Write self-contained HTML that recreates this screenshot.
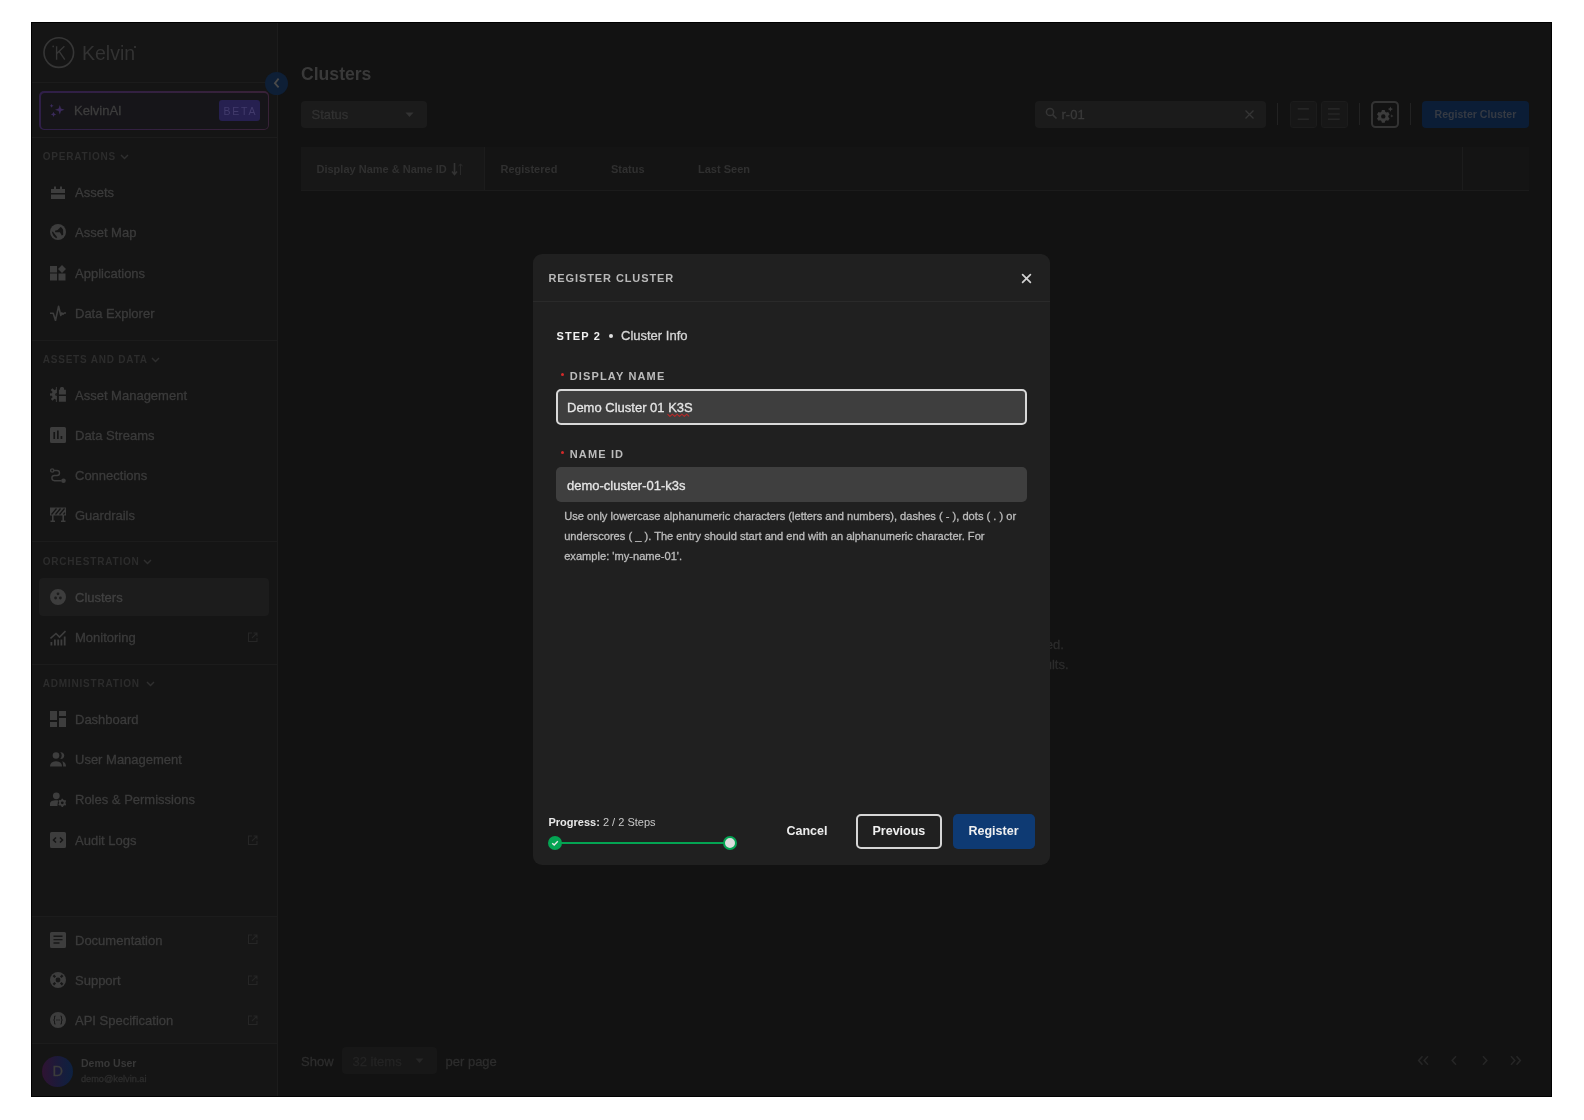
<!DOCTYPE html>
<html><head><meta charset="utf-8">
<style>
*{margin:0;padding:0;box-sizing:border-box}
html,body{width:1584px;height:1120px;overflow:hidden;background:#fff}
body{position:relative;font-family:"Liberation Sans",sans-serif;-webkit-font-smoothing:antialiased}
.a{position:absolute}
.t{position:absolute;white-space:nowrap;line-height:1;top:calc(var(--b) - var(--fs) * 0.8465);font-size:var(--fs)}
.b{font-weight:bold}
.m{-webkit-text-stroke:0.3px currentColor}
#app{position:absolute;left:32px;top:23px;width:1519px;height:1073px;background:#121212;overflow:hidden}
#frame{position:absolute;left:31px;top:22px;width:1521px;height:1075px;border:1px solid #000}
#sb{position:absolute;left:32px;top:23px;width:246px;height:1073px;background:#151515;border-right:1px solid #1c1c1c}
.sep{position:absolute;left:32px;width:245px;height:1px;background:#1c1c1c}
.nav{color:#3b3b3b;--fs:13px}
.sh{color:#2c2c2c;--fs:10px;font-weight:bold;letter-spacing:0.8px}
.ic{position:absolute;fill:#3a3a3a}
.ext{position:absolute;left:246px;width:12px;height:12px}
#sidebar,#main,#modalc{position:absolute;left:0;top:0;width:1584px;height:1120px;will-change:transform}
#modal{position:absolute;left:533px;top:254px;width:517px;height:611px;background:#202020;border-radius:9px}
</style></head>
<body>
<div id="frame"></div>
<div id="app"></div>
<div id="sb"></div>
<!-- SIDEBAR -->
<div id="sidebar">
<div class="sep" style="top:82px"></div>
<div class="sep" style="top:137px"></div>
<div class="sep" style="top:340px"></div>
<div class="sep" style="top:541px"></div>
<div class="sep" style="top:664px"></div>
<div class="a" style="left:32px;top:917px;width:245px;height:126px;background:#171717"></div>
<div class="sep" style="top:916px"></div>
<div class="sep" style="top:1043px"></div>
<!-- logo -->
<svg class="a" style="left:42px;top:36px" width="34" height="34" viewBox="0 0 34 34"><circle cx="16.8" cy="16.6" r="14.8" fill="none" stroke="#363636" stroke-width="1.6"/><path d="M14.6 10.3v13.4M14.8 17.5l7.6-7.2M17.2 15.3l5.6 8.4" fill="none" stroke="#363636" stroke-width="1.4"/><circle cx="11.2" cy="10.4" r="0.9" fill="#363636"/></svg>
<div class="t" style="left:82px;--b:61px;--fs:19.5px;color:#323232">Kelvin</div>
<div class="a" style="left:134px;top:46px;width:2px;height:2px;border-radius:1px;background:#383838"></div>
<!-- KelvinAI -->
<div class="a" style="left:39px;top:91px;width:230px;height:39px;border-radius:5px;padding:1.5px;background:linear-gradient(90deg,#2f1f48,#382238)"><div style="width:100%;height:100%;border-radius:4px;background:#161519"></div></div>
<svg class="a" style="left:49px;top:102px" width="17" height="16" viewBox="0 0 17 16" fill="#3a2a5a"><path d="M10.8 3l1.2 3.6 3.6 1.2-3.6 1.2-1.2 3.6-1.2-3.6L6 7.8l3.6-1.2z"/><path d="M2.6 1.8l.6 1.4 1.4.6-1.4.6-.6 1.4-.6-1.4-1.4-.6 1.4-.6z"/><path d="M4.5 9.8l.8 1.8 1.8.8-1.8.8-.8 1.8-.8-1.8-1.8-.8 1.8-.8z"/></svg>
<div class="t nav m" style="left:74px;--b:114.8px;color:#3d3d3d">KelvinAI</div>
<div class="a" style="left:219px;top:100px;width:41px;height:21px;border-radius:3px;background:#262050"></div>
<div class="t" style="left:223.5px;--b:114.4px;--fs:10.5px;letter-spacing:1.8px;color:#423b6c">BETA</div>
<!-- collapse -->
<div class="a" style="left:265px;top:71.7px;width:23px;height:23px;border-radius:50%;background:#0e1f36"></div>
<svg class="a" style="left:270.5px;top:77px" width="12" height="12" viewBox="0 0 12 12"><path d="M7.6 1.6L3.9 6.2l3.7 4.2" fill="none" stroke="#4a4a4a" stroke-width="1.8"/></svg>
<!-- section headers -->
<div class="t sh" style="left:42.7px;--b:160.8px">OPERATIONS</div>
<div class="t sh" style="left:42.7px;--b:363.4px">ASSETS AND DATA</div>
<div class="t sh" style="left:42.7px;--b:565.8px">ORCHESTRATION</div>
<div class="t sh" style="left:42.7px;--b:687.5px">ADMINISTRATION</div>
<svg class="a" style="left:120px;top:154px" width="9" height="6" viewBox="0 0 9 6"><path d="M1 1l3.5 3.5L8 1" fill="none" stroke="#2f2f2f" stroke-width="1.5"/></svg>
<svg class="a" style="left:151.2px;top:356.6px" width="9" height="6" viewBox="0 0 9 6"><path d="M1 1l3.5 3.5L8 1" fill="none" stroke="#2f2f2f" stroke-width="1.5"/></svg>
<svg class="a" style="left:142.5px;top:559px" width="9" height="6" viewBox="0 0 9 6"><path d="M1 1l3.5 3.5L8 1" fill="none" stroke="#2f2f2f" stroke-width="1.5"/></svg>
<svg class="a" style="left:145.5px;top:680.7px" width="9" height="6" viewBox="0 0 9 6"><path d="M1 1l3.5 3.5L8 1" fill="none" stroke="#2f2f2f" stroke-width="1.5"/></svg>
<!-- active -->
<div class="a" style="left:39px;top:578px;width:230px;height:38px;border-radius:4px;background:#1c1c1c"></div>
<svg class="a" style="left:50px;top:184.3px" width="16" height="16" viewBox="0 0 16 16" fill="#3d3d3d"><path d="M1 5h3V2.5h2V5h4V2.5h2V5h3v4H1z M1 10.5h14V15H1z"/></svg>
<div class="t nav m" style="left:75px;--b:197.1px">Assets</div>
<svg class="a" style="left:50px;top:224px" width="16" height="16" viewBox="0 0 16 16" fill="#3d3d3d"><circle cx="8" cy="8" r="8"/><path fill="#151515" d="M1.8 7.6L3.2 8l4 5.3-1 1C4 13 2.5 11 1.8 7.6z M5 6.7l2.6-.6 3-3.1c1.2.6 2 1.6 2.5 3l.1 4.8-1.4.7-1.9-3.3H5.2z"/></svg>
<div class="t nav m" style="left:75px;--b:237.5px">Asset Map</div>
<svg class="a" style="left:50px;top:265.0px" width="16" height="16" viewBox="0 0 16 16" fill="#3d3d3d"><rect x="0" y="1" width="7" height="6.5"/><path d="M12 0l4 4-4 4-4-4z"/><rect x="0" y="8.5" width="7" height="7"/><rect x="8.5" y="8.5" width="7" height="7"/></svg>
<div class="t nav m" style="left:75px;--b:277.8px">Applications</div>
<svg class="a" style="left:50px;top:305.4px" width="16" height="16" viewBox="0 0 16 16" fill="#3d3d3d"><path d="M0 8.2h3.2L5.5 15.5 8.6 1.2l2.2 9.3 1.1-2.6L13 9.2 14.4 8H16" fill="none" stroke="#3d3d3d" stroke-width="1.6" stroke-linejoin="round"/></svg>
<div class="t nav m" style="left:75px;--b:318.2px">Data Explorer</div>
<svg class="a" style="left:50px;top:387.0px" width="16" height="16" viewBox="0 0 16 16" fill="#3d3d3d"><defs><clipPath id="hg"><rect x="-1" y="-1" width="7.8" height="18"/></clipPath></defs><g clip-path="url(#hg)"><circle cx="7" cy="7.4" r="5.2"/><rect x="5.9" y="-0.2" width="2.4" height="15.2" transform="rotate(0 7 7.4)"/><rect x="5.9" y="-0.2" width="2.4" height="15.2" transform="rotate(45 7 7.4)"/><rect x="5.9" y="-0.2" width="2.4" height="15.2" transform="rotate(90 7 7.4)"/><rect x="5.9" y="-0.2" width="2.4" height="15.2" transform="rotate(135 7 7.4)"/><circle cx="7" cy="7.4" r="1.7" fill="#151515"/></g><path d="M9.9 2.8V1.6A1.6 1.6 0 0 1 11.5 0h1A1.6 1.6 0 0 1 14.1 1.6v1.2h1.8v4.7H8.9V2.8z M8.9 9h7v5.8h-7z"/></svg>
<div class="t nav m" style="left:75px;--b:399.8px">Asset Management</div>
<svg class="a" style="left:50px;top:427.2px" width="16" height="16" viewBox="0 0 16 16" fill="#3d3d3d"><path d="M1.5 0h13A1.5 1.5 0 0 1 16 1.5v13a1.5 1.5 0 0 1-1.5 1.5h-13A1.5 1.5 0 0 1 0 14.5v-13A1.5 1.5 0 0 1 1.5 0zM3.4 5v7h1.7V5zm3.6-1.5V12h1.7V3.5zm3.6 5.5V12h1.7V9z"/></svg>
<div class="t nav m" style="left:75px;--b:440.0px">Data Streams</div>
<svg class="a" style="left:50px;top:467.5px" width="16" height="16" viewBox="0 0 16 16" fill="#3d3d3d"><g fill="none" stroke="#3d3d3d" stroke-width="1.4"><circle cx="2.2" cy="2.5" r="1.6"/><path d="M3.8 2.5h3.2a2.5 2.5 0 0 1 0 5h-2.5a2.6 2.6 0 0 0 0 5.2h7"/></g><circle cx="13.5" cy="12.8" r="2.3"/></svg>
<div class="t nav m" style="left:75px;--b:480.3px">Connections</div>
<svg class="a" style="left:50px;top:507.4px" width="16" height="16" viewBox="0 0 16 16" fill="#3d3d3d"><path d="M0 0.5h16v8H0z M2 8.5h1.6v5H5V15H.5v-1.5H2z M12.4 8.5H14v5h1.5V15H11v-1.5h1.4z"/><path d="M1.5 7.5L6.5 1.5M5.5 7.5l5-6M9.5 7.5l5-6M13.5 7.5l1.5-1.8" stroke="#151515" stroke-width="1.3"/></svg>
<div class="t nav m" style="left:75px;--b:520.2px">Guardrails</div>
<svg class="a" style="left:50px;top:589.0px" width="16" height="16" viewBox="0 0 16 16" fill="#3d3d3d"><path d="M8 0a8 8 0 1 0 0 16A8 8 0 0 0 8 0zm0 3.4a1.4 1.4 0 1 1 0 2.8 1.4 1.4 0 0 1 0-2.8zM5.6 7.6a1.4 1.4 0 1 1 0 2.8 1.4 1.4 0 0 1 0-2.8zm4.8 0a1.4 1.4 0 1 1 0 2.8 1.4 1.4 0 0 1 0-2.8z"/></svg>
<div class="t nav m" style="left:75px;--b:601.8px;color:#414141">Clusters</div>
<svg class="a" style="left:50px;top:629.7px" width="16" height="16" viewBox="0 0 16 16" fill="#3d3d3d"><path d="M0.5 8.5L6 3.5l3.5 3.5L15.5 1" fill="none" stroke="#3d3d3d" stroke-width="1.6"/><rect x="0.5" y="12" width="1.8" height="3.5"/><rect x="4" y="9.5" width="1.8" height="6"/><rect x="7.3" y="9.5" width="1.8" height="6"/><rect x="10.5" y="9.5" width="1.8" height="6"/><rect x="13.8" y="6.5" width="1.8" height="9"/></svg>
<div class="t nav m" style="left:75px;--b:642.5px">Monitoring</div>
<svg class="a" style="left:246.5px;top:632.2px" width="11" height="11" viewBox="0 0 11 11"><path d="M5 1H1.5v8.5H10V6 M6.5 1H10v3.5 M10 1L5 6" fill="none" stroke="#262626" stroke-width="1.1"/></svg>
<svg class="a" style="left:50px;top:711.1px" width="16" height="16" viewBox="0 0 16 16" fill="#3d3d3d"><rect x="0" y="0" width="7" height="9"/><rect x="9" y="0" width="7" height="5"/><rect x="0" y="11" width="7" height="5"/><rect x="9" y="7" width="7" height="9"/></svg>
<div class="t nav m" style="left:75px;--b:723.9px">Dashboard</div>
<svg class="a" style="left:50px;top:751.4px" width="16" height="16" viewBox="0 0 16 16" fill="#3d3d3d"><circle cx="6" cy="4.5" r="3.3"/><path d="M0 15.5c0-3.5 2.5-5.3 6-5.3s6 1.8 6 5.3z"/><path d="M10.3 1.2a3.4 3.4 0 1 1 0 6.7 4.6 4.6 0 0 0 0-6.7z M12.3 10.3c2.2.6 3.7 2.4 3.7 5.2h-2.8c0-2.1-.3-3.7-.9-5.2z"/></svg>
<div class="t nav m" style="left:75px;--b:764.2px">User Management</div>
<svg class="a" style="left:50px;top:791.7px" width="16" height="16" viewBox="0 0 16 16" fill="#3d3d3d"><circle cx="6.3" cy="3.8" r="3.4"/><path d="M0 14v-2.2c0-2.4 2.8-3.5 6.3-3.5 .8 0 1.3.1 1.8.2L7.4 14z"/><path fill-rule="evenodd" d="M11.28 7.66 L11.58 6.66 L13.02 6.66 L13.32 7.66 L14.51 8.35 L15.52 8.11 L16.24 9.36 L15.53 10.11 L15.53 11.49 L16.24 12.24 L15.52 13.49 L14.51 13.25 L13.32 13.94 L13.02 14.94 L11.58 14.94 L11.28 13.94 L10.09 13.25 L9.08 13.49 L8.36 12.24 L9.07 11.49 L9.07 10.11 L8.36 9.36 L9.08 8.11 L10.09 8.35ZM13.70 10.80a1.4 1.4 0 1 0 -2.80 0a1.4 1.4 0 1 0 2.80 0z"/></svg>
<div class="t nav m" style="left:75px;--b:804.5px">Roles &amp; Permissions</div>
<svg class="a" style="left:50px;top:832.0px" width="16" height="16" viewBox="0 0 16 16" fill="#3d3d3d"><path d="M1.5 0h13A1.5 1.5 0 0 1 16 1.5v13a1.5 1.5 0 0 1-1.5 1.5h-13A1.5 1.5 0 0 1 0 14.5v-13A1.5 1.5 0 0 1 1.5 0z"/><path d="M6 5.5L3.5 8 6 10.5M10 5.5L12.5 8 10 10.5" fill="none" stroke="#151515" stroke-width="1.5"/></svg>
<div class="t nav m" style="left:75px;--b:844.8px">Audit Logs</div>
<svg class="a" style="left:246.5px;top:834.5px" width="11" height="11" viewBox="0 0 11 11"><path d="M5 1H1.5v8.5H10V6 M6.5 1H10v3.5 M10 1L5 6" fill="none" stroke="#262626" stroke-width="1.1"/></svg>
<svg class="a" style="left:50px;top:931.9px" width="16" height="16" viewBox="0 0 16 16" fill="#3d3d3d"><path d="M1.5 0h13A1.5 1.5 0 0 1 16 1.5v13a1.5 1.5 0 0 1-1.5 1.5h-13A1.5 1.5 0 0 1 0 14.5v-13A1.5 1.5 0 0 1 1.5 0zM3.5 3.5v1.4h9V3.5zm0 3.4v1.4h9V6.9zm0 3.4v1.4h6v-1.4z"/></svg>
<div class="t nav m" style="left:75px;--b:944.7px">Documentation</div>
<svg class="a" style="left:246.5px;top:934.4px" width="11" height="11" viewBox="0 0 11 11"><path d="M5 1H1.5v8.5H10V6 M6.5 1H10v3.5 M10 1L5 6" fill="none" stroke="#262626" stroke-width="1.1"/></svg>
<svg class="a" style="left:50px;top:972.2px" width="16" height="16" viewBox="0 0 16 16" fill="#3d3d3d"><circle cx="8" cy="8" r="8"/><circle cx="8" cy="8" r="2.4" fill="#171717"/><path d="M5.3 5.3L3.4 3.4M10.7 5.3l1.9-1.9M5.3 10.7l-1.9 1.9M10.7 10.7l1.9 1.9" stroke="#171717" stroke-width="2.2"/></svg>
<div class="t nav m" style="left:75px;--b:985.0px">Support</div>
<svg class="a" style="left:246.5px;top:974.7px" width="11" height="11" viewBox="0 0 11 11"><path d="M5 1H1.5v8.5H10V6 M6.5 1H10v3.5 M10 1L5 6" fill="none" stroke="#262626" stroke-width="1.1"/></svg>
<svg class="a" style="left:50px;top:1012.4px" width="16" height="16" viewBox="0 0 16 16" fill="#3d3d3d"><path fill-rule="evenodd" d="M8 0a8 8 0 1 0 0 16A8 8 0 0 0 8 0zM5.5 3.5C4.3 3.5 4 4.3 4 5.3v1.5c0 .6-.4 1-1 1.2.6.2 1 .6 1 1.2v1.5c0 1 .3 1.8 1.5 1.8v-1c-.4 0-.5-.3-.5-.8V9.2c0-.6-.3-1-.7-1.2.4-.2.7-.6.7-1.2V5.3c0-.5.1-.8.5-.8zm5 0v1c.4 0 .5.3.5.8v1.5c0 .6.3 1 .7 1.2-.4.2-.7.6-.7 1.2v1.5c0 .5-.1.8-.5.8v1c1.2 0 1.5-.8 1.5-1.8V9.2c0-.6.4-1 1-1.2-.6-.2-1-.6-1-1.2V5.3c0-1-.3-1.8-1.5-1.8zM6.3 7.4h.9v1h-.9zm1.3 0h.9v1h-.9zm1.3 0h.9v1h-.9z"/></svg>
<div class="t nav m" style="left:75px;--b:1025.2px">API Specification</div>
<svg class="a" style="left:246.5px;top:1014.9px" width="11" height="11" viewBox="0 0 11 11"><path d="M5 1H1.5v8.5H10V6 M6.5 1H10v3.5 M10 1L5 6" fill="none" stroke="#262626" stroke-width="1.1"/></svg>
<!-- user -->
<div class="a" style="left:42.2px;top:1055.5px;width:31px;height:31px;border-radius:50%;background:linear-gradient(90deg,#2f1332,#1c1a3a 50%,#0d2140)"></div>
<div class="t m" style="left:52.5px;--b:1076.3px;--fs:14.5px;color:#3c3c3c">D</div>
<div class="t b" style="left:81px;--b:1066.6px;--fs:10.5px;color:#383838">Demo User</div>
<div class="t m" style="left:81px;--b:1083px;--fs:9.2px;color:#2e2e2e">demo@kelvin.ai</div>
</div>
<!-- MAIN -->
<div id="main">
<div class="t b" style="left:301px;--b:81.1px;--fs:17.6px;color:#393939">Clusters</div>
<!-- status dropdown -->
<div class="a" style="left:301px;top:101px;width:126px;height:27px;border-radius:4px;background:#1b1b1b"></div>
<div class="t m" style="left:311.5px;--b:119.1px;--fs:13px;color:#313131">Status</div>
<svg class="a" style="left:405px;top:111.8px" width="9" height="6" viewBox="0 0 9 6"><path d="M0.5 0.5h8L4.5 5z" fill="#333"/></svg>
<!-- search -->
<div class="a" style="left:1035px;top:101px;width:231px;height:27px;border-radius:4px;background:#1b1b1b"></div>
<svg class="a" style="left:1045px;top:107.4px" width="13" height="13" viewBox="0 0 13 13"><circle cx="5" cy="5" r="3.6" fill="none" stroke="#353535" stroke-width="1.5"/><path d="M7.6 7.6L11.5 11.5" stroke="#353535" stroke-width="1.7"/></svg>
<div class="t m" style="left:1061.5px;--b:119.1px;--fs:13px;color:#3a3a3a">r-01</div>
<svg class="a" style="left:1244px;top:109px" width="11" height="11" viewBox="0 0 11 11"><path d="M1.5 1.5l8 8M9.5 1.5l-8 8" stroke="#353535" stroke-width="1.3"/></svg>
<div class="a" style="left:1277px;top:103px;width:1px;height:22px;background:#222"></div>
<div class="a" style="left:1290px;top:101px;width:27px;height:27px;border-radius:3px;border:1px solid #1c1c1c;background:#171717"></div>
<svg class="a" style="left:1290px;top:101px" width="27" height="27" viewBox="0 0 27 27"><path d="M7.7 7.9h11.2M7.7 18.2h11.2" stroke="#262626" stroke-width="1.6"/></svg>
<div class="a" style="left:1321px;top:101px;width:27px;height:27px;border-radius:3px;border:1px solid #1c1c1c;background:#171717"></div>
<svg class="a" style="left:1321px;top:101px" width="27" height="27" viewBox="0 0 27 27"><path d="M7 7.9h11.7M7 13h11.7M7 18.2h11.7" stroke="#262626" stroke-width="1.6"/></svg>
<div class="a" style="left:1359px;top:103px;width:1px;height:22px;background:#222"></div>
<div class="a" style="left:1371px;top:100.5px;width:27.5px;height:27.5px;border-radius:4.5px;border:2px solid #333"></div>
<svg class="a" style="left:1371px;top:100.5px" width="28" height="28" viewBox="0 0 28 28"><path fill="#3c3c3c" fill-rule="evenodd" d="M14.21 20.02 L13.71 21.85 L10.89 21.85 L10.39 20.02 L9.26 19.37 L7.42 19.85 L6.01 17.40 L7.34 16.05 L7.34 14.75 L6.01 13.40 L7.42 10.95 L9.26 11.43 L10.39 10.78 L10.89 8.95 L13.71 8.95 L14.21 10.78 L15.34 11.43 L17.18 10.95 L18.59 13.40 L17.26 14.75 L17.26 16.05 L18.59 17.40 L17.18 19.85 L15.34 19.37ZM14.50 15.40a2.2 2.2 0 1 0 -4.40 0a2.2 2.2 0 1 0 4.40 0z"/><path fill="#3a3a3a" d="M19.4 5.5L20.18 7.32L22.0 8.1L20.18 8.88L19.4 10.7L18.62 8.88L16.799999999999997 8.1L18.62 7.32Z M20.8 13.200000000000001L21.31 14.39L22.5 14.9L21.31 15.41L20.8 16.6L20.29 15.41L19.1 14.9L20.29 14.39Z"/></svg>
<div class="a" style="left:1410px;top:103px;width:1px;height:22px;background:#222"></div>
<div class="a" style="left:1422px;top:101px;width:107px;height:27px;border-radius:4px;background:#0b1d36"></div>
<div class="t b" style="left:1434.5px;--b:118.4px;--fs:10.6px;color:#353a43">Register Cluster</div>
<!-- table header -->
<div class="a" style="left:301px;top:147px;width:1228px;height:44px;background:#141414;border-bottom:1px solid #1b1b1b"></div>
<div class="a" style="left:301px;top:147px;width:184px;height:43px;background:#171717;border-right:1px solid #1c1c1c"></div>
<div class="a" style="left:1462px;top:147px;width:1px;height:43px;background:#1c1c1c"></div>
<div class="t b" style="left:316.5px;--b:173.1px;--fs:11px;color:#303030">Display Name &amp; Name ID</div>
<svg class="a" style="left:451px;top:162px" width="13" height="14" viewBox="0 0 13 14"><path d="M3.5 1v11M1 9.5l2.5 3 2.5-3" fill="none" stroke="#333" stroke-width="1.6"/><path d="M9.5 13V2M7.5 4.3l2-2.5 2 2.5" fill="none" stroke="#292929" stroke-width="1"/></svg>
<div class="t b" style="left:500.5px;--b:173.1px;--fs:11px;color:#303030">Registered</div>
<div class="t b" style="left:611px;--b:173.1px;--fs:11px;color:#303030">Status</div>
<div class="t b" style="left:698px;--b:173.1px;--fs:11px;color:#303030">Last Seen</div>
<!-- empty state tails -->
<div class="t m" style="left:750px;width:313.8px;text-align:right;--b:649px;--fs:13px;color:#2c2c2c">No clusters have been registered.</div>
<div class="t m" style="left:750px;width:318.6px;text-align:right;--b:669px;--fs:13px;color:#2c2c2c">Try adjusting the filters for better results.</div>
<!-- footer -->
<div class="t m" style="left:301px;--b:1065.8px;--fs:13px;color:#2d2d2d">Show</div>
<div class="a" style="left:341.5px;top:1047px;width:95.5px;height:27px;border-radius:4px;background:#171717"></div>
<div class="t m" style="left:352.5px;--b:1065.8px;--fs:13px;color:#242424">32 items</div>
<svg class="a" style="left:415px;top:1058px" width="9" height="6" viewBox="0 0 9 6"><path d="M0.5 0.5h8L4.5 5z" fill="#262626"/></svg>
<div class="t m" style="left:445.5px;--b:1065.8px;--fs:13px;color:#2d2d2d">per page</div>
<svg class="a" style="left:1412px;top:1052px" width="115" height="17" viewBox="0 0 115 17"><g fill="none" stroke="#262626" stroke-width="1.6"><path d="M10.5 4.3l-3.8 4.2 3.8 4.2M16 4.3l-3.8 4.2 3.8 4.2"/><path d="M44 4.3l-3.8 4.2 3.8 4.2"/><path d="M71 4.3l3.8 4.2-3.8 4.2"/><path d="M99 4.3l3.8 4.2-3.8 4.2M104.5 4.3l3.8 4.2-3.8 4.2"/></g></svg>
</div>
<!-- MODAL -->
<div id="modal"></div>
<div id="modalc">
<div class="a" style="left:533px;top:301px;width:517px;height:1px;background:#2a2a2a"></div>
<div class="t b" style="left:548.5px;--b:282.5px;--fs:11px;letter-spacing:0.9px;color:#b8b8b8">REGISTER CLUSTER</div>
<svg class="a" style="left:1020.3px;top:271.7px" width="13" height="13" viewBox="0 0 13 13"><path d="M2.6 2.6l7.8 7.8M10.4 2.6l-7.8 7.8" stroke="#d2d2d2" stroke-width="1.7" stroke-linecap="round"/></svg>
<div class="t b" style="left:556.5px;--b:340px;--fs:11px;letter-spacing:1.15px;color:#f0f0f0">STEP 2</div>
<div class="a" style="left:609px;top:334px;width:4px;height:4px;border-radius:50%;background:#e0e0e0"></div>
<div class="t m" style="left:621px;--b:340px;--fs:13px;color:#d6d6d6">Cluster Info</div>
<div class="a" style="left:560.5px;top:372.5px;width:3px;height:3px;border-radius:50%;background:#d42a2a"></div>
<div class="t b" style="left:569.7px;--b:380.2px;--fs:11px;letter-spacing:1.15px;color:#bcbcbc">DISPLAY NAME</div>
<div class="a" style="left:556px;top:389px;width:471px;height:35.5px;border-radius:5px;border:2px solid #d9d9d9;background:#3e3e3e"></div>
<div class="t m" style="left:567px;--b:411.8px;--fs:13px;color:#e6e6e6">Demo Cluster 01 K3S</div>
<svg class="a" style="left:667px;top:412.8px" width="24" height="4" viewBox="0 0 24 4"><path d="M0.5 1.2l2.4 2.2 2.4-2.2 2.4 2.2 2.4-2.2 2.4 2.2 2.4-2.2 2.4 2.2 2.4-2.2 2.4 2.2" fill="none" stroke="#b82a2a" stroke-width="1.1"/></svg>
<div class="a" style="left:560.5px;top:450.5px;width:3px;height:3px;border-radius:50%;background:#d42a2a"></div>
<div class="t b" style="left:569.7px;--b:458.1px;--fs:11px;letter-spacing:1.15px;color:#bcbcbc">NAME ID</div>
<div class="a" style="left:556px;top:467px;width:471px;height:35px;border-radius:5px;background:#3f3f3f"></div>
<div class="t m" style="left:567px;--b:490.2px;--fs:13px;color:#e6e6e6">demo-cluster-01-k3s</div>
<div class="t m" style="left:564.2px;--b:520.5px;--fs:11.12px;color:#bdbdbd">Use only lowercase alphanumeric characters (letters and numbers), dashes ( - ), dots ( . ) or</div>
<div class="t m" style="left:564.2px;--b:540.7px;--fs:11.12px;color:#bdbdbd">underscores ( _ ). The entry should start and end with an alphanumeric character. For</div>
<div class="t m" style="left:564.2px;--b:560.7px;--fs:11.12px;color:#bdbdbd">example: 'my-name-01'.</div>
<!-- footer -->
<div class="t" style="left:548.5px;--b:826.5px;--fs:11px;color:#c8c8c8"><b style="color:#e8e8e8">Progress:</b> 2 / 2 Steps</div>
<div class="a" style="left:555px;top:842px;width:175px;height:2px;background:#04a453"></div>
<div class="a" style="left:548px;top:836px;width:14px;height:14px;border-radius:50%;background:#04a453"></div>
<svg class="a" style="left:548px;top:836px" width="14" height="14" viewBox="0 0 14 14"><path d="M4.2 7.2l2 1.9 3.6-3.8" fill="none" stroke="#e8e8e8" stroke-width="1.4"/></svg>
<div class="a" style="left:723px;top:836px;width:14px;height:14px;border-radius:50%;background:#dcdcdc;border:2px solid #04a453"></div>
<div class="t b" style="left:786.5px;--b:835.4px;--fs:12.5px;color:#ececec">Cancel</div>
<div class="a" style="left:855.5px;top:813.5px;width:86px;height:35px;border-radius:5px;border:2px solid #d6d6d6"></div>
<div class="t b" style="left:872.5px;--b:835.4px;--fs:12.5px;color:#f0f0f0">Previous</div>
<div class="a" style="left:953px;top:813.5px;width:81.5px;height:35px;border-radius:5px;background:#0e3a73"></div>
<div class="t b" style="left:968.5px;--b:835.4px;--fs:12.5px;color:#f0f0f0">Register</div>
</div>
</body></html>
